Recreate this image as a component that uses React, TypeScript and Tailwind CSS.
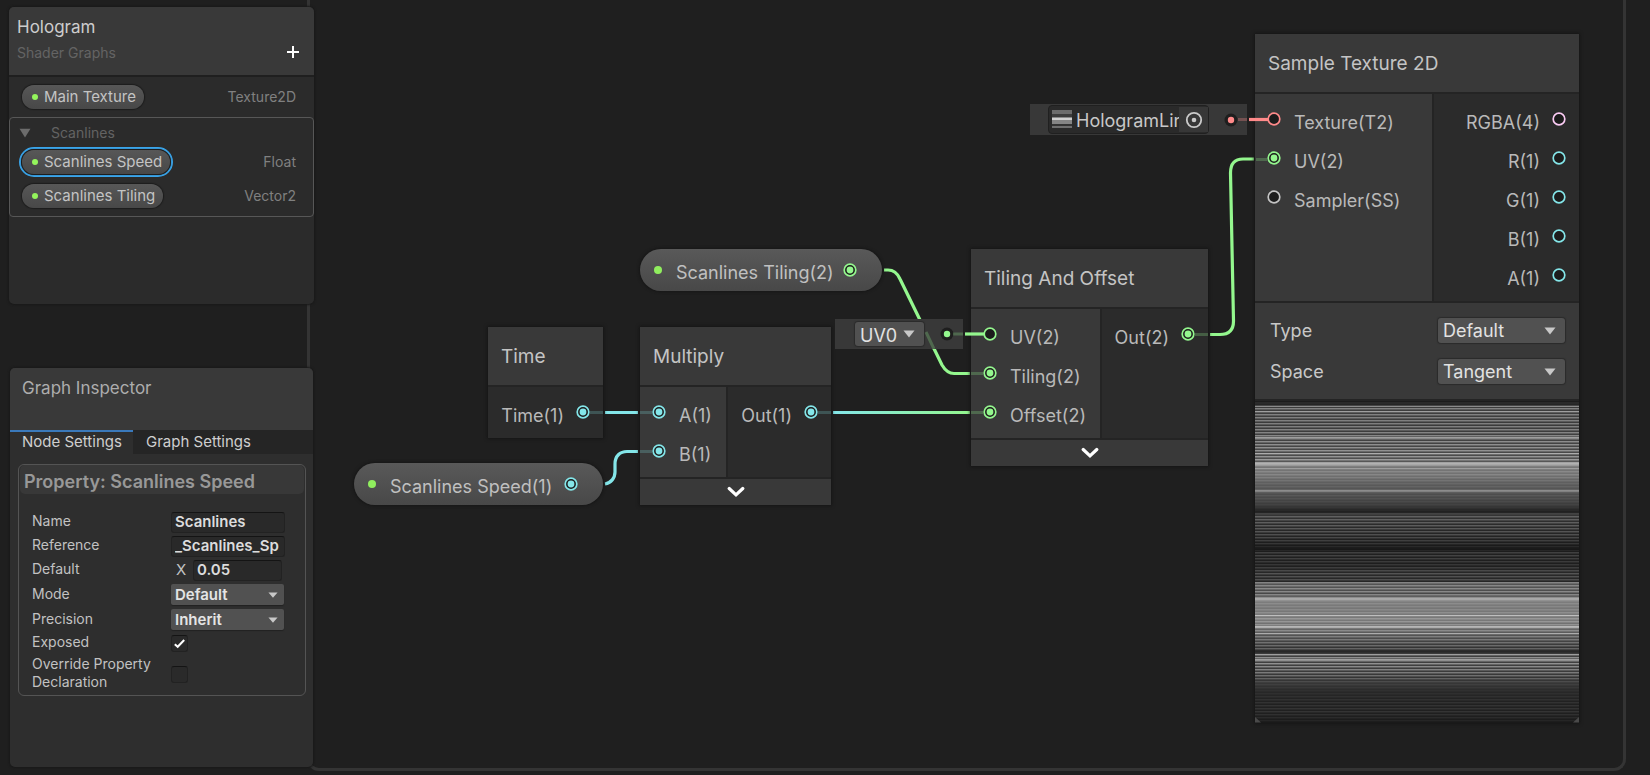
import { useState } from "react";
import type { ReactNode } from "react";

const GREEN = "#94f78e";
const CYAN = "#84e6e9";
const RED = "#ff8a8a";
const PINK = "#fbcbf4";
const GREY = "#c4c4c4";

type PortProps = { color: string; filled?: boolean };

function Port({ color, filled = false }: PortProps) {
  return (
    <svg className="h-3.5 w-3.5 shrink-0" viewBox="0 0 14 14" aria-hidden="true">
      <circle cx="7" cy="7" r="5.8" fill="#1c1c1c" stroke={color} strokeWidth="1.7" />
      {filled && <circle cx="7" cy="7" r="3.4" fill={color} />}
    </svg>
  );
}

function Triangle({ className }: { className: string }) {
  return (
    <svg className={className} viewBox="0 0 12 8" preserveAspectRatio="none" aria-hidden="true">
      <path d="M0.5 0.5H11.5L6 7.5Z" fill="currentColor" />
    </svg>
  );
}

type PortItem = { label: string; color: string; filled?: boolean };

function InputRow({ label, color, filled }: PortItem) {
  return (
    <li className="flex h-[39px] items-center gap-[13px]">
      <Port color={color} filled={filled} />
      <span className="pt-[9px]">{label}</span>
    </li>
  );
}

function OutputRow({ label, color, filled }: PortItem) {
  return (
    <li className="flex h-[39px] items-center justify-end gap-3">
      <span className="pt-[9px]">{label}</span>
      <Port color={color} filled={filled} />
    </li>
  );
}

type NodeProps = {
  title: string;
  className: string;
  inputs?: PortItem[];
  inputsClass?: string;
  outputs: PortItem[];
  collapsible?: boolean;
  children?: ReactNode;
};

function GraphNode({ title, className, inputs, inputsClass = "", outputs, collapsible, children }: NodeProps) {
  return (
    <section className={`absolute bg-[#242424] text-lg leading-6 text-[#b9b9b9] shadow-[0_0_3px_1px_#161616] ${className}`}>
      <h2 className="flex h-[58px] items-center bg-[#393939] px-[13px] pt-0.5 text-[19px] text-[#c4c4c4]">{title}</h2>
      <div className="mt-0.5 flex gap-0.5">
        {inputs && (
          <ul className={`bg-[#393939] pt-[5px] pb-[7px] pl-3 ${inputsClass}`}>
            {inputs.map((p) => (
              <InputRow key={p.label} {...p} />
            ))}
          </ul>
        )}
        <ul className="flex-1 bg-[#2b2b2b] pt-[5px] pr-[13px] pb-[7px]">
          {outputs.map((p) => (
            <OutputRow key={p.label} {...p} />
          ))}
        </ul>
      </div>
      {collapsible && (
        <button type="button" aria-label={`Collapse ${title}`} className="mt-0.5 flex h-[26px] w-full items-center justify-center bg-[#393939]">
          <svg className="h-3 w-[18px]" viewBox="0 0 18 12" aria-hidden="true">
            <path d="M2.2 2.5L9 8.8L15.8 2.5" fill="none" stroke="#fff" strokeWidth="3.2" strokeLinecap="round" strokeLinejoin="miter" />
          </svg>
        </button>
      )}
      {children}
    </section>
  );
}

function PropertyNode({ label, color, className }: { label: string; color: string; className: string }) {
  return (
    <section className={`absolute flex h-[42px] items-center rounded-full bg-linear-to-b from-[#595959] to-[#484848] pl-3.5 text-lg leading-6 text-[#c0c0c0] shadow-[0_0_3px_1px_#161616] ${className}`}>
      <span className="h-2 w-2 rounded-full bg-[#90ee5e]" />
      <span className="flex-1 pl-3.5 pt-1.5">{label}</span>
      <Port color={color} filled />
    </section>
  );
}

function Dropdown({ name, options, className }: { name: string; options: string[]; className: string }) {
  return (
    <span className={`relative flex rounded-[3px] bg-[#515151] text-[#e2e2e2] shadow-[0_0_1px_1px_#2b2b2b] ${className}`}>
      <select aria-label={name} className="w-full appearance-none bg-transparent pl-[5px] outline-none">
        {options.map((o) => (
          <option key={o} className="bg-[#383838]">
            {o}
          </option>
        ))}
      </select>
      <Triangle className="pointer-events-none absolute right-[9px] top-1/2 h-2 w-3 -translate-y-1/2 text-[#c8c8c8]" />
    </span>
  );
}

/* Scanline texture: each stop gives the brightness of the lit and unlit rows. */
const STOPS: [number, number, number][] = [
  [0, 32, 28],
  [4, 70, 40],
  [6, 130, 60],
  [12, 128, 62],
  [24, 126, 58],
  [40, 140, 66],
  [56, 148, 76],
  [62, 165, 92],
  [66, 140, 118],
  [74, 134, 112],
  [82, 104, 92],
  [92, 92, 78],
  [98, 80, 70],
  [104, 64, 58],
  [108, 44, 40],
  [110, 36, 30],
  [114, 98, 52],
  [124, 92, 42],
  [134, 78, 36],
  [142, 54, 28],
  [146, 36, 24],
  [152, 70, 32],
  [164, 54, 30],
  [172, 84, 40],
  [180, 76, 38],
  [181, 132, 86],
  [188, 138, 80],
  [193, 134, 70],
  [198, 146, 128],
  [206, 134, 118],
  [218, 152, 122],
  [228, 140, 100],
  [238, 120, 72],
  [249, 96, 44],
  [253, 140, 64],
  [262, 144, 64],
  [272, 120, 58],
  [277, 98, 50],
  [281, 68, 56],
  [290, 46, 40],
  [302, 50, 32],
  [310, 52, 32],
  [318, 40, 28],
  [322, 26, 24],
];

const ACCENTS: Record<number, number> = {
  5: 138,
  10: 158,
  36: 158,
  52: 172,
  62: 178,
  63: 168,
  67: 158,
  89: 140,
  90: 128,
  147: 26,
  148: 24,
  197: 168,
  198: 166,
  214: 190,
  225: 182,
  226: 172,
  232: 172,
  250: 40,
  251: 46,
  253: 158,
  258: 158,
};

const PHASE = [1, 0.45, 0];

function rowLevel(y: number): number {
  if (ACCENTS[y] !== undefined) return ACCENTS[y];
  let i = 0;
  while (i < STOPS.length - 2 && STOPS[i + 1][0] <= y) i++;
  const [y0, l0, d0] = STOPS[i];
  const [y1, l1, d1] = STOPS[i + 1];
  const t = (y - y0) / (y1 - y0);
  const light = l0 + (l1 - l0) * t;
  const dark = d0 + (d1 - d0) * t;
  return Math.round(dark + (light - dark) * PHASE[(y + 2) % 3]);
}

const ROWS = Array.from({ length: 322 }, (_, y) => rowLevel(y));

function ScanlinePreview() {
  return (
    <svg className="mt-0.5 block h-[322px] w-full" viewBox="0 0 324 322" preserveAspectRatio="none" shapeRendering="crispEdges" role="img" aria-label="Texture preview">
      {ROWS.map((v, y) => (
        <rect key={y} x="0" y={y} width="324" height="1" fill={`rgb(${v},${v},${v})`} />
      ))}
      <path d="M0 316L6 321.5H0ZM324 316L318 321.5H324Z" fill="#4a4a4a" shapeRendering="auto" />
    </svg>
  );
}

function Edges() {
  return (
    <svg className="absolute left-0 top-0 h-[771px] w-[1313px]" viewBox="310 0 1313 771" fill="none" strokeWidth="3.2" aria-hidden="true">
      <defs>
        <linearGradient id="vecUp" gradientUnits="userSpaceOnUse" x1="833" y1="0" x2="970" y2="0">
          <stop offset="0" stopColor={CYAN} />
          <stop offset="1" stopColor={GREEN} />
        </linearGradient>
      </defs>
      <path d="M605 412.5H638" stroke={CYAN} />
      <path d="M605 484C611 483 615 478 615 472V464C615 456 620 451.5 627 451.5H638" stroke={CYAN} />
      <path d="M833 412.5H970" stroke="url(#vecUp)" />
      <path d="M884 270H888Q896 270 900 279L942 365Q947 373.5 954 373.5H970" stroke={GREEN} />
      <path d="M1210 334.5H1220Q1233.5 334.5 1233.5 321L1230.5 173Q1230.5 159 1243 159H1254" stroke={GREEN} />
    </svg>
  );
}

function EdgeGhosts() {
  return (
    <svg className="pointer-events-none absolute left-0 top-0 h-[771px] w-[1313px]" viewBox="310 0 1313 771" fill="none" strokeWidth="3" aria-hidden="true">
      <g stroke={CYAN} strokeOpacity="0.22">
        <path d="M590 412.5H603M640 412.5H652M640 451.5H652M818 412.5H831" />
      </g>
      <g stroke={GREEN} strokeOpacity="0.25">
        <path d="M971 373.5H983M971 412.5H983M1195 334.5H1208M1256 159.5H1267M953 334H963M926 332L934 349" />
      </g>
      <path d="M1238 119.5H1247" stroke={RED} strokeOpacity="0.3" />
      <path d="M1249 119.5H1268" stroke={RED} strokeWidth="3.2" />
      <path d="M965 334H984" stroke={GREEN} strokeWidth="3.2" />
    </svg>
  );
}

function SlotDot({ color }: { color: string }) {
  return (
    <svg className="h-4 w-4 shrink-0" viewBox="0 0 16 16" aria-hidden="true">
      <circle cx="8" cy="8" r="6.5" fill="#1e1e1e" />
      <circle cx="8" cy="8" r="3.2" fill={color} />
    </svg>
  );
}

function Canvas() {
  return (
    <main className="relative -ml-[7px] mr-6 mb-1 min-h-[771px] flex-1 rounded-b-xl border-x-[3px] border-b-[3px] border-[#343434]">
      <Edges />
      <GraphNode title="Time" className="left-[178px] top-[327px] w-[115px]" outputs={[{ label: "Time(1)", color: CYAN, filled: true }]} />
      <GraphNode
        title="Multiply"
        className="left-[330px] top-[327px] w-[191px]"
        inputs={[
          { label: "A(1)", color: CYAN, filled: true },
          { label: "B(1)", color: CYAN, filled: true },
        ]}
        inputsClass="w-[86px]"
        outputs={[{ label: "Out(1)", color: CYAN, filled: true }]}
        collapsible
      />
      <PropertyNode label="Scanlines Tiling(2)" color={GREEN} className="left-[330px] top-[249px] w-[242px] pr-[25px]" />
      <PropertyNode label="Scanlines Speed(1)" color={CYAN} className="left-11 top-[463px] w-[249px] pr-[25px]" />
      <GraphNode
        title="Tiling And Offset"
        className="left-[661px] top-[249px] w-[237px]"
        inputs={[
          { label: "UV(2)", color: GREEN },
          { label: "Tiling(2)", color: GREEN, filled: true },
          { label: "Offset(2)", color: GREEN, filled: true },
        ]}
        inputsClass="w-[129px]"
        outputs={[{ label: "Out(2)", color: GREEN, filled: true }]}
        collapsible
      />
      <div className="absolute left-[525px] top-[319px] flex h-[30px] w-32 items-center justify-between bg-[#383838] pl-5 pr-2 text-lg">
        <Dropdown name="UV channel" options={["UV0", "UV1", "UV2", "UV3"]} className="h-6 w-[69px]" />
        <SlotDot color={GREEN} />
      </div>
      <div className="absolute left-[720px] top-[104px] flex h-[31px] w-[217px] items-center justify-between bg-[#383838] pl-[18px] pr-2">
        <div className="flex h-[29px] w-[161px] items-center rounded border border-[#202020] bg-[#2a2a2a] pl-[3px]">
          <svg className="h-[19px] w-5 shrink-0" viewBox="0 0 20 19" shapeRendering="crispEdges" aria-hidden="true">
            <path d="M0 0H20V4H0Z" fill="#6c6c6c" />
            <path d="M0 4H20V7H0Z" fill="#3c3c3c" />
            <path d="M0 7H20V8H0Z" fill="#8a8a8a" />
            <path d="M0 8H20V10H0Z" fill="#d0d0d0" />
            <path d="M0 10H20V14H0Z" fill="#858585" />
            <path d="M0 14H20V16H0Z" fill="#333333" />
            <path d="M0 16H20V18H0Z" fill="#6e6e6e" />
          </svg>
          <span className="ml-1 flex-1 overflow-hidden whitespace-nowrap pt-0.5 text-lg leading-6 text-[#c8c8c8]">HologramLin</span>
          <button type="button" aria-label="Select texture" className="flex h-[25px] w-[29px] shrink-0 items-center justify-center bg-[#373737]">
            <svg className="h-[18px] w-[18px]" viewBox="0 0 18 18" aria-hidden="true">
              <circle cx="9" cy="9" r="7.2" fill="none" stroke="#cacaca" strokeWidth="1.8" />
              <circle cx="9" cy="9" r="2.3" fill="#cacaca" />
            </svg>
          </button>
        </div>
        <SlotDot color={RED} />
      </div>
      <GraphNode
        title="Sample Texture 2D"
        className="left-[945px] top-[34px] w-[324px]"
        inputs={[
          { label: "Texture(T2)", color: RED },
          { label: "UV(2)", color: GREEN, filled: true },
          { label: "Sampler(SS)", color: GREY },
        ]}
        inputsClass="w-[177px]"
        outputs={[
          { label: "RGBA(4)", color: PINK },
          { label: "R(1)", color: CYAN },
          { label: "G(1)", color: CYAN },
          { label: "B(1)", color: CYAN },
          { label: "A(1)", color: CYAN },
        ]}
      >
        <div className="mt-0.5 flex h-24 flex-col gap-4 bg-[#393939] pt-[15px] pl-[15px] pr-3.5 text-[#c8c8c8]">
          <div className="flex h-[25px] items-center justify-between">
            <span>Type</span>
            <Dropdown name="Type" options={["Default", "Normal"]} className="h-[25px] w-[127px]" />
          </div>
          <div className="flex h-[25px] items-center justify-between">
            <span>Space</span>
            <Dropdown name="Space" options={["Tangent", "Object"]} className="h-[25px] w-[127px]" />
          </div>
        </div>
        <ScanlinePreview />
      </GraphNode>
      <EdgeGhosts />
    </main>
  );
}

function Pill({ label, type, selected = false }: { label: string; type: string; selected?: boolean }) {
  return (
    <li className="flex h-[30px] items-center justify-between pl-2.5 pr-[18px]">
      <button type="button" className={`flex rounded-full border-2 p-px ${selected ? "border-[#3aa5ea]" : "border-transparent"}`}>
        <span className="flex h-6 items-center gap-1.5 rounded-full bg-linear-to-b from-[#575757] to-[#484848] px-2.5 pr-2 text-[15px] text-[#c4c4c4] shadow-[0_0_1px_1px_#1c1c1c]">
          <span className="h-1.5 w-1.5 rounded-full bg-[#94f55c]" />
          {label}
        </span>
      </button>
      <span className="text-sm text-[#808080]">{type}</span>
    </li>
  );
}

function Blackboard() {
  return (
    <section className="h-[297px] overflow-hidden rounded-[5px] bg-[#2b2b2b] shadow-[0_0_2px_1px_#191919]">
      <header className="flex h-[70px] items-end justify-between border-b-2 border-[#1f1f1f] bg-[#393939] px-2 pb-2.5">
        <div>
          <h1 className="text-[17px] leading-7 text-[#cdcdcd]">Hologram</h1>
          <p className="text-sm leading-6 text-[#646464]">Shader Graphs</p>
        </div>
        <button type="button" aria-label="Add property" className="mr-[7px] mb-[7px]">
          <svg className="h-3 w-3" viewBox="0 0 12 12" aria-hidden="true">
            <path d="M6 0V12M0 6H12" stroke="#fff" strokeWidth="2" />
          </svg>
        </button>
      </header>
      <ul className="py-[5px]">
        <Pill label="Main Texture" type="Texture2D" />
      </ul>
      <div className="h-[100px] rounded border border-[#575757]">
        <button type="button" className="flex h-[29px] items-center pl-[9px] text-sm text-[#636363]">
          <Triangle className="mr-5 h-2.5 w-3 text-[#6c6c6c]" />
          Scanlines
        </button>
        <ul className="-mx-px flex flex-col gap-1">
          <Pill label="Scanlines Speed" type="Float" selected />
          <Pill label="Scanlines Tiling" type="Vector2" />
        </ul>
      </div>
    </section>
  );
}

function Field({ id, label, children, className = "h-6" }: { id: string; label: string; children: ReactNode; className?: string }) {
  return (
    <div className={`flex items-center ${className}`}>
      <label htmlFor={id} className="w-[139px] shrink-0 pb-0.5 leading-[18px] text-[#c2c2c2]">
        {label}
      </label>
      {children}
    </div>
  );
}

const inputClass = "h-[21px] rounded-[3px] border border-[#222222] border-t-[#141414] bg-[#292929] px-[3px] text-[15px] font-semibold text-[#dcdcdc] outline-none";

function FieldSelect({ id, options }: { id: string; options: string[] }) {
  return (
    <span className="relative flex h-[21px] w-[113px] rounded-[2px] bg-[#515151] text-[15px] font-semibold text-[#e4e4e4] shadow-[0_1px_1px_#222222]">
      <select id={id} className="w-full appearance-none bg-transparent pl-1 outline-none">
        {options.map((o) => (
          <option key={o} className="bg-[#383838]">
            {o}
          </option>
        ))}
      </select>
      <Triangle className="pointer-events-none absolute right-1.5 top-1/2 h-1.5 w-2.5 -translate-y-1/2 text-[#c8c8c8]" />
    </span>
  );
}

function Check({ id, initial }: { id: string; initial: boolean }) {
  const [on, setOn] = useState(initial);
  return (
    <span className="relative flex h-[17px] w-[17px]">
      <input
        id={id}
        type="checkbox"
        checked={on}
        onChange={() => setOn(!on)}
        className="h-[17px] w-[17px] appearance-none rounded-[3px] border border-[#222222] border-t-[#141414] bg-[#2a2a2a]"
      />
      {on && (
        <svg className="pointer-events-none absolute inset-0 h-[17px] w-[17px]" viewBox="0 0 17 17" aria-hidden="true">
          <path d="M3.8 9.2L6.7 11.8L13.2 5" fill="none" stroke="#fff" strokeWidth="2" />
        </svg>
      )}
    </span>
  );
}

function Inspector() {
  const [name, setName] = useState("Scanlines");
  const [reference, setReference] = useState("_Scanlines_Sp");
  const [value, setValue] = useState("0.05");
  return (
    <section className="mx-px min-h-[399px] rounded-[5px] bg-[#2e2e2e] shadow-[0_0_2px_1px_#191919]">
      <header className="h-[62px] rounded-t-[5px] bg-[#393939] px-3 pt-2">
        <h2 className="text-[17px] leading-6 text-[#adadad]">Graph Inspector</h2>
      </header>
      <div role="tablist" className="flex h-6 bg-[#252525] text-[15px] leading-5 text-[#cfcfcf]">
        <button type="button" role="tab" aria-selected="true" className="flex w-[123px] border-t-2 border-[#3a79bb] bg-[#2e2e2e] pl-3 text-left">
          Node Settings
        </button>
        <button type="button" role="tab" aria-selected="false" className="flex border-t-2 border-transparent px-[13px]">
          Graph Settings
        </button>
      </div>
      <div className="mr-[7px] ml-2 mt-2.5 h-[232px] rounded-md border border-[#545454] text-sm">
        <h3 className="mx-px h-[29px] rounded-[5px] bg-[#383838] px-1 pt-[5px] text-lg leading-6 font-semibold text-[#989898]">Property: Scanlines Speed</h3>
        <div className="flex flex-col pt-4 pl-[13px]">
          <Field id="name" label="Name">
            <input id="name" className={`w-[114px] ${inputClass}`} value={name} onChange={(e) => setName(e.target.value)} />
          </Field>
          <Field id="reference" label="Reference">
            <input id="reference" className={`w-[114px] ${inputClass}`} value={reference} onChange={(e) => setReference(e.target.value)} />
          </Field>
          <Field id="value" label="Default">
            <span className="w-[22px] pl-[5px] text-[15px] text-[#c2c2c2]">X</span>
            <input id="value" className={`w-[89px] ${inputClass}`} value={value} onChange={(e) => setValue(e.target.value)} />
          </Field>
          <Field id="mode" label="Mode" className="h-[25px]">
            <FieldSelect id="mode" options={["Default", "Slider"]} />
          </Field>
          <Field id="precision" label="Precision" className="h-[25px]">
            <FieldSelect id="precision" options={["Inherit", "Single", "Half"]} />
          </Field>
          <Field id="exposed" label="Exposed" className="h-[22px]">
            <Check id="exposed" initial />
          </Field>
          <Field id="override" label="Override Property Declaration" className="h-10">
            <Check id="override" initial={false} />
          </Field>
        </div>
      </div>
    </section>
  );
}

export default function App() {
  return (
    <div className="flex min-h-screen overflow-hidden bg-[#1f1f1f] font-['Inter',sans-serif]">
      <aside className="relative z-10 flex w-[314px] shrink-0 flex-col gap-16 pt-[7px] pl-[9px]">
        <Blackboard />
        <Inspector />
      </aside>
      <Canvas />
    </div>
  );
}
